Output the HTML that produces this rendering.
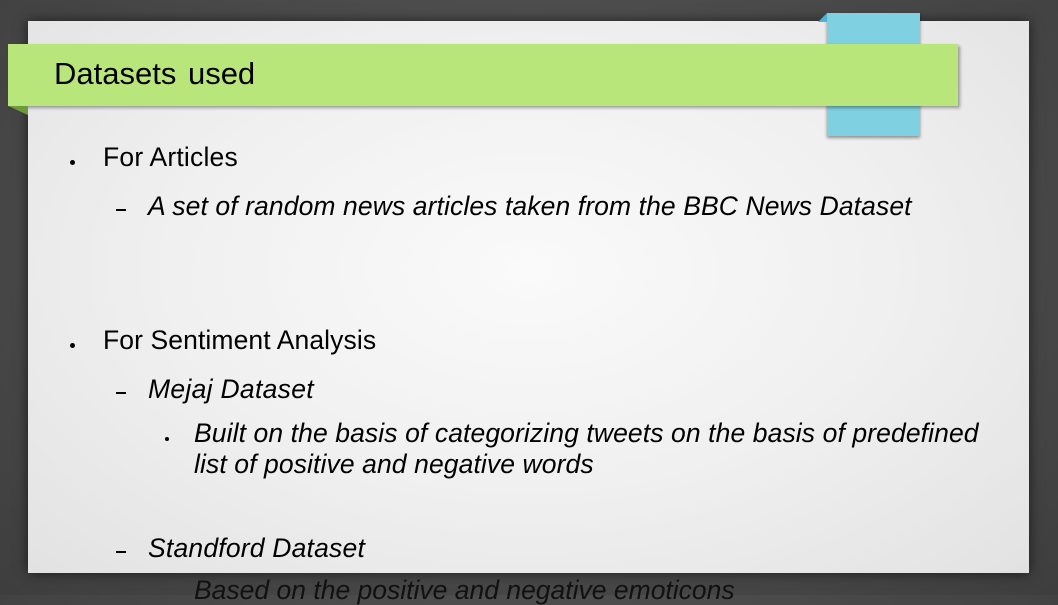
<!DOCTYPE html>
<html><head><style>
html,body{margin:0;padding:0}
body{width:1058px;height:595px;overflow:hidden;position:relative;background:radial-gradient(ellipse at 50% 40%,#5a5a5a,#3e3e3e);font-family:"Liberation Sans",Arial,sans-serif;color:#000}
.slide{position:absolute;left:28px;top:21px;width:1001px;height:552px;background:radial-gradient(ellipse at 50% 45%,#fafafa 0%,#f0f0f0 50%,#e2e2e2 100%);box-shadow:0 0 12px rgba(0,0,0,.6)}
.blue{position:absolute;left:827px;top:13px;width:93px;height:123px;background:#7fd0e0;box-shadow:0 2px 3px rgba(0,0,0,.4)}
.blue:before{content:"";position:absolute;left:-9px;top:0;border-right:9px solid #4bb3cc;border-top:9px solid transparent}
.green{position:absolute;left:8px;top:44px;width:950px;height:62px;background:#b8e67a;box-shadow:2px 2px 3px rgba(0,0,0,.35)}
.green:after{content:"";position:absolute;left:0;top:62px;border-top:9px solid #6e9a3c;border-left:20px solid transparent}
.title{position:absolute;left:54px;top:56px;font-size:31px;word-spacing:3px}
.t{position:absolute;font-size:26.5px;white-space:nowrap;line-height:30px}
.i{font-style:italic}
.dot{position:absolute;width:5px;height:5px;border-radius:50%;background:#000}
.dash{position:absolute;width:10px;height:2px;background:#000}
</style></head><body>
<div class="slide"></div>
<div class="blue"></div>
<div class="green"></div>
<div class="title">Datasets used</div>
<div class="dot" style="left:70px;top:160px"></div>
<div class="t" style="left:103px;top:142px;letter-spacing:0.2px">For Articles</div>
<div class="dash" style="left:116px;top:209px"></div>
<div class="t i" style="left:148px;top:191px;letter-spacing:0.1px">A set of random news articles taken from the BBC News Dataset</div>
<div class="dot" style="left:70px;top:343px"></div>
<div class="t" style="left:103px;top:325px;letter-spacing:0.1px">For Sentiment Analysis</div>
<div class="dash" style="left:116px;top:392px"></div>
<div class="t i" style="left:148px;top:374px;letter-spacing:0.3px">Mejaj Dataset</div>
<div class="dot" style="left:165px;top:437px;width:4px;height:4px"></div>
<div class="t i" style="left:194px;top:418px;letter-spacing:0.1px">Built on the basis of categorizing tweets on the basis of predefined</div>
<div class="t i" style="left:194px;top:449px;letter-spacing:0.1px">list of positive and negative words</div>
<div class="dash" style="left:116px;top:551px"></div>
<div class="t i" style="left:148px;top:533px;letter-spacing:0.2px">Standford Dataset</div>
<div class="t i" style="left:194px;top:575px;color:#111;letter-spacing:0px">Based on the positive and negative emoticons</div>
</body></html>
